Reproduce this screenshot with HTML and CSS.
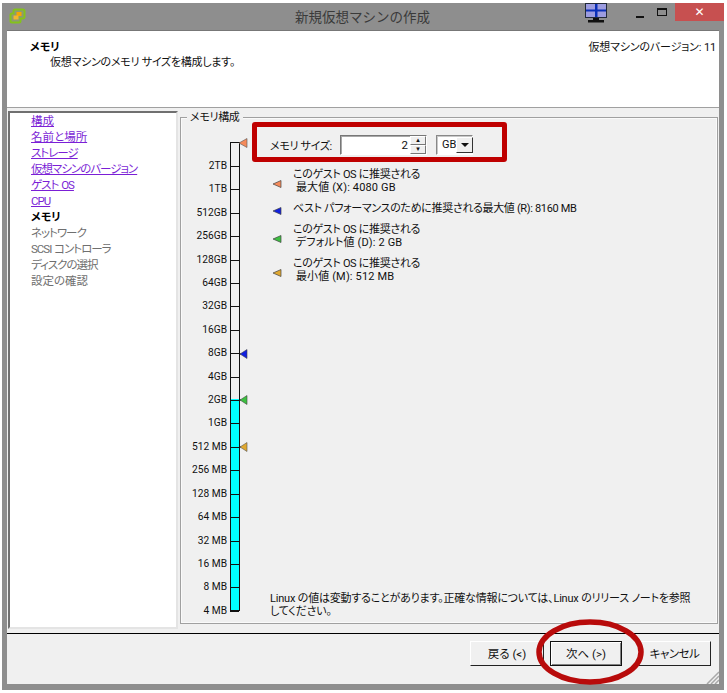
FILE: index.html
```html
<!DOCTYPE html>
<html lang="ja">
<head>
<meta charset="utf-8">
<title>新規仮想マシンの作成</title>
<link rel="stylesheet" href="styles.css">
</head>
<body>
<div class="window">
  <div class="titlebar">
    <svg class="app-icon" width="17" height="16" viewBox="0 0 17 16"><path d="M6 1.500h8a1.500 1.500 0 0 1 1.500 1.500v6a1.500 1.500 0 0 1-1.500 1.500h-2.500V13a1.500 1.500 0 0 1-1.500 1.500H3A1.500 1.500 0 0 1 1.500 13V7A1.500 1.500 0 0 1 3 5.500h1.500V3A1.500 1.500 0 0 1 6 1.500z" fill="#8d9a72" stroke="#84c21c" stroke-width="2"/><rect x="7.500" y="4" width="5" height="4" fill="#f7a600"/><rect x="4.500" y="7.500" width="5" height="4" fill="#f2b62e"/></svg>
    <div class="title">新規仮想マシンの作成</div>
    <svg class="monitor" width="22" height="20" viewBox="0 0 22 20"><rect x="0.500" y="0.500" width="21" height="14" fill="#9c9ce0" stroke="#222a3a"/><rect x="10" y="1" width="2.500" height="13" fill="#0a2fb8"/><rect x="1" y="6.500" width="20" height="2" fill="#0a2fb8"/><rect x="8" y="15" width="6" height="2" fill="#111"/><rect x="3" y="17" width="16" height="2.500" fill="#111"/></svg>
    <div class="caption-min"></div>
    <div class="caption-max"></div>
    <div class="caption-close">✕</div>
  </div>
  <div class="client">
    <header class="head">
      <div>
        <div class="head-title">メモリ</div>
        <div class="head-sub">仮想マシンのメモリ サイズを構成します。</div>
      </div>
      <div class="head-version">仮想マシンのバージョン: 11</div>
    </header>
    <div class="head-rule"></div>
    <div class="main">
      <nav class="steps">
        <a class="step link">構成</a>
        <a class="step link">名前と場所</a>
        <a class="step link tight">ストレージ</a>
        <a class="step link tight">仮想マシンのバージョン</a>
        <a class="step link tight">ゲスト OS</a>
        <a class="step link tight">CPU</a>
        <span class="step current">メモリ</span>
        <span class="step muted tight">ネットワーク</span>
        <span class="step muted tight">SCSI コントローラ</span>
        <span class="step muted tight">ディスクの選択</span>
        <span class="step muted">設定の確認</span>
      </nav>
      <section class="group">
        <div class="legend">メモリ構成</div>
        <div class="group-body">
          <div class="scale">
            <div class="bar">
              <div class="bar-fill"></div>
              <svg class="pin pin-x" width="9" height="10" viewBox="0 0 9 10"><path d="M0 5 8 .5v9z" fill="#f58a5a" stroke="#555" stroke-width=".6"/></svg>
              <svg class="pin pin-r" width="9" height="10" viewBox="0 0 9 10"><path d="M0 5h2" stroke="#111"/><path d="M1 5 8 .5v9z" fill="#1020e0" stroke="#444" stroke-width=".6"/></svg>
              <svg class="pin pin-d" width="9" height="10" viewBox="0 0 9 10"><path d="M0 5h2" stroke="#111"/><path d="M1 5 8 .5v9z" fill="#3cc040" stroke="#444" stroke-width=".6"/></svg>
              <svg class="pin pin-m" width="9" height="10" viewBox="0 0 9 10"><path d="M0 5h2" stroke="#111"/><path d="M1 5 8 .5v9z" fill="#e0a830" stroke="#555" stroke-width=".6"/></svg>
            </div>
            <div class="scale-labels">
              <span>2TB</span><span>1TB</span><span>512GB</span><span>256GB</span><span>128GB</span><span>64GB</span><span>32GB</span><span>16GB</span><span>8GB</span><span>4GB</span><span>2GB</span><span>1GB</span><span>512 MB</span><span>256 MB</span><span>128 MB</span><span>64 MB</span><span>32 MB</span><span>16 MB</span><span>8 MB</span><span>4 MB</span>
            </div>
          </div>
          <div class="panel">
            <div class="size-row">
              <span class="size-label">メモリ サイズ:</span>
              <div class="spin">
                <div class="spin-value">2</div>
                <div class="spin-btns"><div class="spin-btn">▴</div><div class="spin-btn">▾</div></div>
              </div>
              <div class="combo"><span class="combo-value">GB</span><span class="combo-btn"><i class="combo-arrow"></i></span></div>
            </div>
            <div class="recs">
              <div class="rec rec-x">
                <svg class="flag" width="9" height="8" viewBox="0 0 9 8"><path d="M0 4 8 .5v7z" fill="#f58a5a" stroke="#444" stroke-width=".7"/></svg>
                <div class="rec-text">このゲスト OS に推奨される<br><span class="rec-line">&nbsp;最大値 (X): 4080 GB</span></div>
              </div>
              <div class="rec rec-r">
                <svg class="flag" width="9" height="8" viewBox="0 0 9 8"><path d="M0 4 8 .5v7z" fill="#1020e0" stroke="#444" stroke-width=".7"/></svg>
                <div class="rec-text">ベスト パフォーマンスのために推奨される最大値 (R): 8160 MB</div>
              </div>
              <div class="rec rec-d">
                <svg class="flag" width="9" height="8" viewBox="0 0 9 8"><path d="M0 4 8 .5v7z" fill="#3cc040" stroke="#444" stroke-width=".7"/></svg>
                <div class="rec-text">このゲスト OS に推奨される<br><span class="rec-line">&nbsp;デフォルト値 (D): 2 GB</span></div>
              </div>
              <div class="rec rec-m">
                <svg class="flag" width="9" height="8" viewBox="0 0 9 8"><path d="M0 4 8 .5v7z" fill="#e0a830" stroke="#444" stroke-width=".7"/></svg>
                <div class="rec-text">このゲスト OS に推奨される<br><span class="rec-line">&nbsp;最小値 (M): 512 MB</span></div>
              </div>
            </div>
            <p class="note">Linux の値は変動することがあります。正確な情報については、Linux のリリース ノートを参照してください。</p>
          </div>
        </div>
      </section>
    </div>
    <div class="foot-rule"></div>
    <footer class="foot">
      <button class="btn btn-back">戻る (&lt;)</button>
      <button class="btn btn-next">次へ (&gt;)</button>
      <button class="btn btn-cancel">キャンセル</button>
      <svg class="grip" width="13" height="13" viewBox="0 0 13 13"><path d="M13 1 1 13M13 5 5 13M13 9 9 13" stroke="#a8a8a8" stroke-width="1.500"/></svg>
    </footer>
  </div>
</div>
<div class="callout-box"></div>
<svg class="callout-oval" width="108" height="66" viewBox="0 0 108 66"><ellipse cx="54" cy="33" rx="51" ry="30" fill="none" stroke="#b80b0b" stroke-width="5.500"/></svg>
</body>
</html>
```
FILE: styles.css
```css
* { box-sizing: border-box; }
html, body { margin: 0; padding: 0; background: #fff; }
body {
  width: 727px;
  height: 693px;
  padding: 3px 3px 3px 2px;
  position: relative;
  overflow: hidden;
  font-family: Roboto, "Noto Sans CJK JP", sans-serif;
  font-size: 11px;
  color: #111;
  font-feature-settings: "palt";
}
.window {
  height: 687px;
  background: #8e8e8e;
  display: flex;
  flex-direction: column;
  padding: 0 5px 6px 5px;
}
.titlebar {
  height: 27px;
  margin: 0 -5px 0 -5px;
  flex: none;
  display: flex;
  align-items: flex-start;
  position: relative;
}
.app-icon { margin: 5px 0 0 7px; flex: none; }
.title {
  position: absolute;
  left: 293px;
  top: 5px;
  font-size: 13.500px;
  line-height: 18px;
  color: #3a3a3a;
  font-feature-settings: normal;
}
.monitor { position: absolute; left: 583px; top: 0; }
.caption-min { position: absolute; left: 634px; top: 13px; width: 8px; height: 2px; background: #111; }
.caption-max { position: absolute; left: 655px; top: 5px; width: 10px; height: 8px; border: 1px solid #111; border-top-width: 2px; }
.caption-close {
  position: absolute;
  right: 0;
  top: 0;
  width: 49px;
  height: 18px;
  background: #c75050;
  color: #fff;
  font-size: 12px;
  line-height: 18px;
  text-align: center;
  font-family: "DejaVu Sans", sans-serif;
  font-weight: bold;
}
.client {
  flex: 1;
  min-height: 0;
  background: #f0f0f0;
  display: flex;
  flex-direction: column;
  border-top: 1px solid #777;
}
.head {
  height: 76px;
  flex: none;
  background: #fff;
  display: flex;
  justify-content: space-between;
  padding: 9px 3px 0 23px;
}
.head-title { font-weight: bold; font-size: 11px; line-height: 15px; color: #000; }
.head-sub { margin: 0 0 0 20px; font-size: 11px; letter-spacing: -0.25px; line-height: 15px; }
.head-version { font-size: 11px; letter-spacing: -0.15px; line-height: 15px; }
.head-rule { height: 1px; flex: none; background: #a0a0a0; border-bottom: 0; }
.main {
  height: 525px;
  flex: none;
  display: flex;
  padding: 3px 0 0 1px;
  gap: 2px;
}
.steps {
  width: 170px;
  height: 518px;
  flex: none;
  background: #fff;
  border: 2px solid;
  border-color: #707070 #e4e4e4 #e4e4e4 #707070;
  padding: 0 0 0 21px;
  display: flex;
  flex-direction: column;
  align-items: flex-start;
}
.step { display: block; height: 16px; line-height: 16px; font-size: 11.500px; white-space: nowrap; }
.tight { letter-spacing: -1px; word-spacing: 1px; }
.link { color: #7b1fd6; text-decoration: underline; }
.current { font-weight: bold; color: #000; font-size: 11px; line-height: 18px; }
.muted { color: #6f6f6f; }
.group {
  width: 538px;
  height: 507px;
  margin-top: 6px;
  flex: none;
  border: 1px solid #a0a0a0;
  box-shadow: inset 0 0 0 1px #fafafa;
  position: relative;
}
.legend {
  position: absolute;
  left: 6px;
  top: -7px;
  padding: 0 3px;
  background: #f0f0f0;
  font-size: 11px;
  letter-spacing: -0.3px;
  line-height: 14px;
}
.group-body { display: flex; height: 100%; }
.scale { width: 59px; flex: none; margin-left: -1px; display: flex; position: relative; }
.scale-labels {
  position: absolute;
  right: 11px;
  top: 41px;
  height: 459px;
  display: flex;
  flex-direction: column;
  justify-content: space-between;
  align-items: flex-end;
}
.scale-labels span {
  display: block;
  position: relative;
  height: 14px;
  line-height: 14px;
  font-size: 10.200px;
  white-space: nowrap;
  padding-right: 1px;
}
.scale-labels span::after {
  content: "";
  position: absolute;
  right: -11px;
  top: 7px;
  width: 9px;
  height: 1px;
  background: #111;
}
.bar {
  position: absolute;
  right: -1px;
  top: 24px;
  width: 10px;
  height: 469px;
  border: 1px solid #111;
  background-color: #efefef;
}
.bar-fill { position: absolute; left: 0; right: 0; bottom: 0; height: 211px; background: #00ffff; }
.pin { position: absolute; left: 8px; }
.pin-x { top: -5px; }
.pin-r { top: 206px; }
.pin-d { top: 252px; }
.pin-m { top: 299px; }
.panel {
  flex: 1;
  min-width: 0;
  display: flex;
  flex-direction: column;
  padding: 17px 24px 0 31px;
}
.size-row { display: flex; align-items: center; height: 20px; }
.size-label { width: 70px; flex: none; font-size: 11px; letter-spacing: -0.3px; white-space: nowrap; }
.spin {
  width: 87px;
  height: 20px;
  flex: none;
  display: flex;
  background: #fff;
  border: 1px solid;
  border-color: #777 #fff #fff #777;
  box-shadow: inset 1px 1px 0 #a8a8a8;
}
.spin-value { flex: 1; text-align: right; padding-right: 2px; font-size: 11.500px; line-height: 18px; }
.spin-btns { width: 16px; flex: none; display: flex; flex-direction: column; background: #efefef; }
.spin-btn {
  flex: 1;
  border: 1px solid;
  border-color: #fff #777 #777 #fff;
  font-size: 7px;
  line-height: 7px;
  text-align: center;
  color: #111;
  font-family: "DejaVu Sans", sans-serif;
}
.combo {
  width: 37px;
  height: 20px;
  margin-left: 9px;
  flex: none;
  display: flex;
  background: #fff;
  border: 1px solid;
  border-color: #888 #fff #fff #888;
  box-shadow: inset 1px 1px 0 #c8c8c8;
  padding: 1px;
}
.combo-value { flex: 1; padding-left: 4px; font-size: 11px; line-height: 16px; }
.combo-btn {
  width: 17px;
  flex: none;
  background: #efefef;
  border: 1px solid;
  border-color: #fff #333 #333 #fff;
  display: flex;
  align-items: center;
  justify-content: center;
}
.combo-arrow {
  width: 0;
  height: 0;
  border: 4px solid transparent;
  border-top: 4px solid #111;
  border-bottom: 0;
}
.recs { margin-top: 13px; }
.rec { display: flex; align-items: center; }
.rec-x { height: 26px; }
.rec-r { height: 14px; margin-top: 7px; }
.rec-d { height: 26px; margin-top: 8px; }
.rec-m { height: 26px; margin-top: 8px; }
.flag { flex: none; margin: 6px 11px 0 3px; }
.rec-text { font-size: 11px; letter-spacing: -0.33px; line-height: 13px; white-space: nowrap; }
.rec-line { letter-spacing: 0.15px; }
.note {
  margin: auto 0 5px;
  width: 424px;
  font-size: 11px;
  letter-spacing: -0.2px;
  line-height: 13px;
}
.foot-rule { height: 1px; flex: none; background: #000; margin-top: 0; }
.foot {
  flex: 1;
  min-height: 0;
  display: flex;
  justify-content: flex-end;
  align-items: flex-start;
  padding: 7px 8px 0 0;
  position: relative;
}
.btn {
  height: 25px;
  background: #f0f0f0;
  border: 1px solid;
  border-color: #fff #222 #222 #fff;
  font: 11.500px/20px Roboto, "Noto Sans CJK JP", sans-serif;
  font-feature-settings: "palt";
  color: #111;
  padding: 0;
  flex: none;
}
.btn-back { width: 74px; margin-right: 6px; }
.btn-next {
  width: 72px;
  margin-right: 16px;
  border-color: #111 #111 #111 #111;
  box-shadow: inset 1px 1px 0 #fff, inset -1px -1px 0 #808080;
}
.btn-cancel { width: 73px; letter-spacing: -0.5px; }
.grip { position: absolute; right: 0; bottom: 0; }
.callout-box {
  position: absolute;
  left: 252px;
  top: 122px;
  width: 255px;
  height: 40px;
  border: 5px solid #bf0000;
  border-radius: 3px;
}
.callout-oval { position: absolute; left: 536px; top: 619px; }
```
